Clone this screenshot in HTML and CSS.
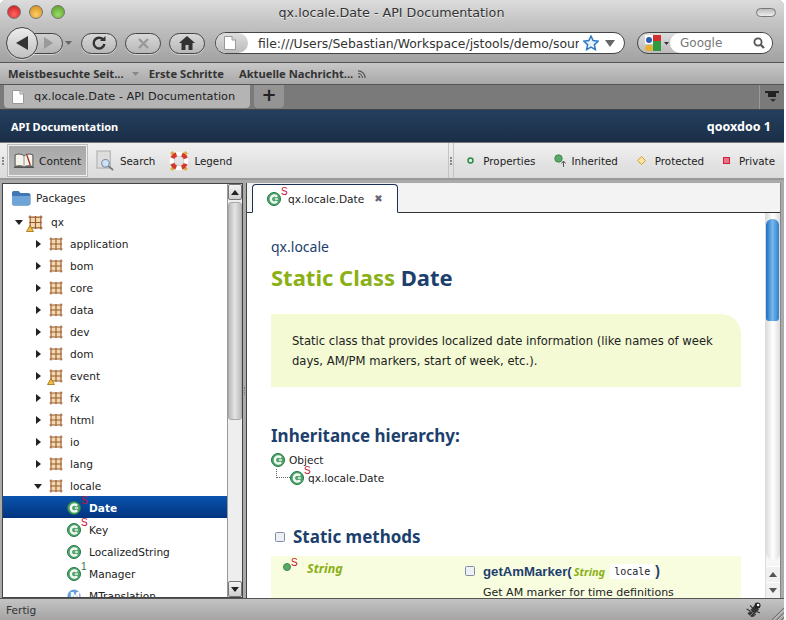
FILE: index.html
```
<!DOCTYPE html>
<html lang="de">
<head>
<meta charset="utf-8">
<title>qx.locale.Date - API Documentation</title>
<link rel="stylesheet" href="styles.css">
</head>
<body>
<svg class="defs" width="0" height="0">
  <defs>
    <symbol id="cls" viewBox="0 0 14 14">
      <circle cx="7" cy="7" r="6.500" fill="#4fa46c" stroke="#1f7a42"/>
      <path d="M10.100 4.800A3.500 3.500 0 1 0 10.100 9.200" fill="none" stroke="#f4f8f4" stroke-width="2.400"/>
      <path d="M7.800 7h3.200" fill="none" stroke="#f4f8f4" stroke-width="1.400"/>
    </symbol>
    <symbol id="pkg" viewBox="0 0 14 14">
      <rect x="2" y="2" width="10" height="10" fill="#f3d9b2"/>
      <path d="M2 2h10v10H2zM7 1v12M1 7h12M2 .5v1.500M12 .5v1.500M2 12v1.500M12 12v1.500M.5 2H2M12 2h1.500M.5 12H2M12 12h1.500" stroke="#9a5a28" stroke-width="1.100" fill="none"/>
    </symbol>
    <symbol id="page" viewBox="0 0 12 14">
      <path d="M.5.5h7.500l3.500 3.500v9.500h-11z" fill="#fff" stroke="#999"/>
      <path d="M8 .5v3.500h3.500" fill="#ddd" stroke="#999"/>
    </symbol>
    <symbol id="box" viewBox="0 0 10 10">
      <rect x=".5" y=".5" width="9" height="9" rx="1" fill="#eef0f4" stroke="#7f8ea6"/>
    </symbol>
    <symbol id="warn" viewBox="0 0 8 7">
      <path d="M4 .5l3.500 6H.5z" fill="#f2c040" stroke="#a06a10" stroke-width=".8"/>
    </symbol>
  </defs>
</svg>
<div class="window">
  <div class="titlebar">
    <div class="lights"><i class="light red"></i><i class="light amber"></i><i class="light green"></i></div>
    <div class="wintitle">qx.locale.Date - API Documentation</div>
    <div class="pill-toggle"></div>
  </div>
  <div class="navbar">
    <div class="backfwd">
      <div class="fwd"><svg width="11" height="12" viewBox="0 0 11 12"><path d="M1 0l9 6-9 6z" fill="#9a9a9a"/></svg></div>
      <div class="back"><svg width="13" height="14" viewBox="0 0 13 14"><path d="M12 0v14L0 7z" fill="#333"/></svg></div>
    </div>
    <svg class="histdrop" width="7" height="4" viewBox="0 0 7 4"><path d="M0 0h7L3.500 4z" fill="#666"/></svg>
    <div class="navbtn"><svg width="16" height="16" viewBox="0 0 16 16"><path d="M12.500 5A5.400 5.400 0 1 0 13.400 9" fill="none" stroke="#333" stroke-width="2.400"/><path d="M9 6h5.500V1z" fill="#333"/></svg></div>
    <div class="navbtn"><svg width="13" height="13" viewBox="0 0 13 13"><path d="M2 2l9 9M11 2l-9 9" stroke="#999" stroke-width="2.400"/></svg></div>
    <div class="navbtn"><svg width="16" height="14" viewBox="0 0 16 14"><path d="M8 0l8 7h-2.500v7H9.500V9h-3v5H2.500V7H0z" fill="#333"/></svg></div>
    <div class="urlbar">
      <div class="identity"><svg width="12" height="14"><use href="#page"/></svg></div>
      <div class="urltext">file:///Users/Sebastian/Workspace/jstools/demo/sourc</div>
      <svg class="star" width="16" height="16" viewBox="0 0 16 16"><path d="M8 1l2.100 4.600 5 .6-3.700 3.400 1 5L8 12.100 3.600 14.600l1-5L.9 6.200l5-.6z" fill="#e8f2fb" stroke="#2f7ac6" stroke-width="1.500"/></svg>
      <svg class="urldrop" width="10" height="7" viewBox="0 0 10 7"><path d="M0 0h10L5 7z" fill="#666"/></svg>
    </div>
    <div class="searchbar">
      <div class="engine">
        <svg width="16" height="16" viewBox="0 0 16 16"><rect x="8" width="8" height="8" fill="#d32f2f"/><rect x="8" y="6" width="8" height="10" fill="#2f9a3f"/><rect y="0" width="8" height="9" fill="#fff"/><circle cx="4" cy="5" r="3" fill="#2a5db0"/><rect y="10" width="8" height="6" rx="3" fill="#e8b030"/></svg>
        <svg width="5" height="3" viewBox="0 0 5 3"><path d="M0 0h5L2.500 3z" fill="#333"/></svg>
      </div>
      <div class="searchfield">
        <span class="searchtext">Google</span>
        <svg width="12" height="12" viewBox="0 0 12 12"><circle cx="5" cy="5" r="3.600" fill="none" stroke="#555" stroke-width="1.800"/><path d="M7.500 7.500L11 11" stroke="#555" stroke-width="2.200"/></svg>
      </div>
    </div>
  </div>
  <div class="bookmarks">
    <span class="bm">Meistbesuchte Seit...</span>
    <svg class="bmdrop" width="7" height="4" viewBox="0 0 7 4"><path d="M0 0h7L3.500 4z" fill="#888"/></svg>
    <span class="bm bm-gap">Erste Schritte</span>
    <span class="bm">Aktuelle Nachricht...</span>
    <svg width="8" height="8" viewBox="0 0 8 8"><circle cx="1.200" cy="6.800" r="1.100" fill="#555"/><path d="M0 3.500A4.500 4.500 0 0 1 4.500 8M0 .8A7.200 7.200 0 0 1 7.200 8" fill="none" stroke="#555" stroke-width="1.200"/></svg>
  </div>
  <div class="tabstrip">
    <div class="btab">
      <svg width="12" height="14"><use href="#page"/></svg>
      <span class="btab-title">qx.locale.Date - API Documentation</span>
    </div>
    <div class="newtab">+</div>
    <div class="tablist">
      <svg width="14" height="12" viewBox="0 0 14 12"><path d="M0 0h14v2h-3v4H3V2H0z" fill="#222"/><path d="M5 8h6L8 11z" fill="#333"/></svg>
    </div>
  </div>
  <div class="appheader">
    <span>API Documentation</span>
    <span class="version">qooxdoo 1</span>
  </div>
  <div class="apptoolbar">
    <div class="grip"></div>
    <div class="tool tool-on">
      <svg width="22" height="16" viewBox="0 0 24 18"><path d="M0 17l2-2h20l2 2z" fill="#555"/><path d="M2 15V2c4-1.500 8-1 10 1.500C14 1 18 .5 22 2v13c-4-1-8-1-10 1-2-2-6-2-10-1z" fill="#f6f3ea" stroke="#444"/><path d="M12 3.500V16" stroke="#888"/><path d="M15 1.500c1 4 3 8 4 12.500" fill="none" stroke="#a33020" stroke-width="1.500"/></svg>
      <span>Content</span>
    </div>
    <div class="tool">
      <svg width="19" height="21" viewBox="0 0 20 22"><rect x="1" y="1" width="14" height="18" fill="#ddd" stroke="#aaa"/><circle cx="10" cy="14" r="4" fill="#cfe2f3" stroke="#7a8ea6" stroke-width="1.200"/><path d="M13 17l5 4" stroke="#777" stroke-width="1.800"/></svg>
      <span>Search</span>
    </div>
    <div class="tool tool-legend">
      <svg width="22" height="22" viewBox="0 0 20 20"><path d="M3 2l3 3M17 2l-3 3M3 18l3-3M17 18l-3-3" stroke="#dcb040" stroke-width="3"/><circle cx="10" cy="10" r="6.500" fill="none" stroke="#fff" stroke-width="4"/><circle cx="10" cy="10" r="6.500" fill="none" stroke="#d43a2a" stroke-width="4" stroke-dasharray="5.100 5.100" stroke-dashoffset="-2.550"/><circle cx="10" cy="10" r="4.300" fill="none" stroke="#bbb" stroke-width=".5"/></svg>
      <span>Legend</span>
    </div>
    <div class="spacer"></div>
    <div class="divider"><div class="grip grip-small"></div></div>
    <div class="legend">
      <div class="leg"><svg width="7" height="7" viewBox="0 0 7 7"><circle cx="3.500" cy="3.500" r="2.500" fill="#dfeee0" stroke="#2f8a4a" stroke-width="1.500"/></svg><span>Properties</span></div>
      <div class="leg leg-tight"><svg width="13" height="14" viewBox="0 0 13 14"><circle cx="4.500" cy="4.500" r="3.700" fill="#58a868" stroke="#3d8a50"/><path d="M9.500 13V7.500M7.500 9.500l2-2.500 2 2.500" fill="none" stroke="#555"/></svg><span>Inherited</span></div>
      <div class="leg"><svg width="9" height="9" viewBox="0 0 9 9"><path d="M4.500.5l4 4-4 4-4-4z" fill="#f9e3a0" stroke="#d0a030"/></svg><span>Protected</span></div>
      <div class="leg"><svg width="7" height="7" viewBox="0 0 7 7"><rect x=".5" y=".5" width="6" height="6" fill="#ee7080" stroke="#d02040"/></svg><span>Private</span></div>
    </div>
  </div>
  <div class="split">
    <div class="treepane">
      <div class="tree">
        <div class="row row-head">
          <svg width="20" height="16" viewBox="0 0 20 16"><path d="M1 3c0-1 .5-2 1.500-2h5l2 2h8c1 0 2 1 2 2v8c0 1.500-1 2.500-2.500 2.500h-14C1.500 15.500 1 14.500 1 13z" fill="#3f78b4"/><path d="M1 6h18v7c0 1.500-1 2.500-2.500 2.500h-14C2 15.500 1 14.500 1 13z" fill="#6fa4d8"/></svg>
          <span>Packages</span>
        </div>
        <div class="row row-root"><i class="arrow down"></i><span class="warned"><svg width="15" height="15"><use href="#pkg"/></svg><svg class="warn" width="8" height="7"><use href="#warn"/></svg></span><span>qx</span></div>
        <div class="row row-pkg"><i class="arrow right"></i><svg width="14" height="14"><use href="#pkg"/></svg><span>application</span></div>
        <div class="row row-pkg"><i class="arrow right"></i><svg width="14" height="14"><use href="#pkg"/></svg><span>bom</span></div>
        <div class="row row-pkg"><i class="arrow right"></i><svg width="14" height="14"><use href="#pkg"/></svg><span>core</span></div>
        <div class="row row-pkg"><i class="arrow right"></i><svg width="14" height="14"><use href="#pkg"/></svg><span>data</span></div>
        <div class="row row-pkg"><i class="arrow right"></i><svg width="14" height="14"><use href="#pkg"/></svg><span>dev</span></div>
        <div class="row row-pkg"><i class="arrow right"></i><svg width="14" height="14"><use href="#pkg"/></svg><span>dom</span></div>
        <div class="row row-pkg"><i class="arrow right"></i><span class="warned"><svg width="14" height="14"><use href="#pkg"/></svg><svg class="warn" width="8" height="7"><use href="#warn"/></svg></span><span>event</span></div>
        <div class="row row-pkg"><i class="arrow right"></i><svg width="14" height="14"><use href="#pkg"/></svg><span>fx</span></div>
        <div class="row row-pkg"><i class="arrow right"></i><svg width="14" height="14"><use href="#pkg"/></svg><span>html</span></div>
        <div class="row row-pkg"><i class="arrow right"></i><svg width="14" height="14"><use href="#pkg"/></svg><span>io</span></div>
        <div class="row row-pkg"><i class="arrow right"></i><svg width="14" height="14"><use href="#pkg"/></svg><span>lang</span></div>
        <div class="row row-pkg"><i class="arrow down"></i><svg width="14" height="14"><use href="#pkg"/></svg><span>locale</span></div>
        <div class="row row-cls row-sel"><span class="marked"><svg width="14" height="14"><use href="#cls"/></svg><sup class="mark">S</sup></span><span>Date</span></div>
        <div class="row row-cls"><span class="marked"><svg width="14" height="14"><use href="#cls"/></svg><sup class="mark">S</sup></span><span>Key</span></div>
        <div class="row row-cls"><span class="marked"><svg width="14" height="14"><use href="#cls"/></svg></span><span>LocalizedString</span></div>
        <div class="row row-cls"><span class="marked"><svg width="14" height="14"><use href="#cls"/></svg><sup class="mark mark-g">1</sup></span><span>Manager</span></div>
        <div class="row row-cls"><span class="marked"><svg width="14" height="14" viewBox="0 0 14 14"><circle cx="7" cy="7" r="6.500" fill="#6a9fd8"/><text x="3" y="11" font-size="10" font-weight="bold" fill="#fff">M</text></svg></span><span>MTranslation</span></div>
      </div>
      <div class="vscroll">
        <div class="sbtn"><i class="up"></i></div>
        <div class="vtrack"><div class="vthumb"></div></div>
        <div class="sbtn"><i class="dn"></i></div>
      </div>
    </div>
    <div class="sash"><i class="sash-dots"></i></div>
    <div class="docpane">
      <div class="doctabs">
        <div class="doctab">
          <span class="marked"><svg width="14" height="14"><use href="#cls"/></svg><sup class="mark">S</sup></span>
          <span class="doctab-title">qx.locale.Date</span>
          <span class="doctab-x">✖</span>
        </div>
      </div>
      <div class="docbody">
        <div class="doc">
          <div class="pkgname">qx.locale</div>
          <h1 class="h1"><span class="h1-g">Static Class</span> Date</h1>
          <div class="desc">Static class that provides localized date information (like names of week days, AM/PM markers, start of week, etc.).</div>
          <h2 class="h2">Inheritance hierarchy:</h2>
          <div class="hier"><span class="marked"><svg width="14" height="14"><use href="#cls"/></svg></span><span>Object</span></div>
          <div class="hier hier-child"><i class="elbow"></i><span class="marked"><svg width="14" height="14"><use href="#cls"/></svg><sup class="mark">S</sup></span><span>qx.locale.Date</span></div>
          <h2 class="h2 h2-box"><svg width="10" height="10"><use href="#box"/></svg>Static methods</h2>
          <div class="method">
            <div class="m-type">
              <span class="marked m-dot"><svg width="8" height="8" viewBox="0 0 8 8"><circle cx="4" cy="4" r="3.500" fill="#58a868" stroke="#3d8a50"/></svg><sup class="mark">S</sup></span>
              <em>String</em>
            </div>
            <div class="m-body">
              <div class="m-sig"><svg width="10" height="10"><use href="#box"/></svg><b>getAmMarker(</b><em>String</em><code>locale</code><b>)</b></div>
              <div class="m-desc">Get AM marker for time definitions</div>
            </div>
          </div>
        </div>
        <div class="vscroll doc-scroll">
          <div class="vtrack"><div class="bluethumb"></div></div>
          <div class="sbtn"><i class="up"></i></div>
          <div class="sbtn"><i class="dn"></i></div>
        </div>
      </div>
    </div>
  </div>
  <div class="statusbar">
    <span>Fertig</span>
    <svg width="17" height="15" viewBox="0 0 14 13"><path d="M3.500 11.500L10 4.500" stroke="#333" stroke-width="5"/><path d="M2 10l3-3M4 12l3-3M6 9l-2-2" stroke="#aaa" stroke-width=".6"/><circle cx="10.500" cy="3" r="2.600" fill="#222"/><circle cx="11" cy="2.600" r="1.100" fill="#fff"/><path d="M1 6l3 1.500M4 3l2.500 2.500M6 13l3-2.500M9.500 8l3 1.500" stroke="#333"/></svg>
    <svg class="resize" width="13" height="13" viewBox="0 0 11 11"><path d="M1 11L11 1M5 11l6-6M9 11l2-2" stroke="#6f6f6f"/><path d="M2 11L11 2M6 11l5-5M10 11l1-1" stroke="#d8d8d8" stroke-width=".7"/></svg>
  </div>
</div>
</body>
</html>
```
FILE: styles.css
```
* { box-sizing: border-box; }
html, body { margin: 0; height: 620px; overflow: hidden; background: #fff; }
.defs { position: absolute; }
.window { width: 784px; height: 620px; display: flex; flex-direction: column; border-radius: 6px 6px 0 0; overflow: hidden; font: 10.600px "DejaVu Sans", sans-serif; color: #222; background: #aaa; }
.titlebar { height: 24px; flex: none; display: grid; grid-template-columns: 1fr auto 1fr; align-items: center; padding: 0 8px 0 7px; background: linear-gradient(#dcdcdc, #c2c2c2); }
.lights { display: flex; gap: 8px; }
.light { width: 14px; height: 14px; border-radius: 50%; border: 1px solid #777; display: block; }
.red { background: radial-gradient(circle at 50% 70%, #f66, #c11); }
.amber { background: radial-gradient(circle at 50% 70%, #fc6, #c81); }
.green { background: radial-gradient(circle at 50% 70%, #9d6, #592); }
.wintitle { font-size: 12.700px; color: #333; text-shadow: 0 1px 0 #eee; white-space: nowrap; }
.pill-toggle { width: 20px; height: 9px; justify-self: end; border: 1px solid #777; border-radius: 5px; background: linear-gradient(#bbb, #eee); }
.navbar { height: 39px; flex: none; display: flex; align-items: center; padding: 0 10px 0 6px; background: linear-gradient(#c2c2c2, #a2a2a2); border-bottom: 1px solid #555; }
.backfwd { width: 57px; height: 33px; position: relative; display: flex; align-items: center; }
.back { width: 32px; height: 32px; border-radius: 50%; border: 1px solid #444; background: linear-gradient(#ececec, #c0c0c0); box-shadow: 0 1px 0 rgba(255, 255, 255, .5); display: flex; align-items: center; justify-content: center; position: absolute; left: 0; top: 0; }
.fwd { position: absolute; left: 24px; top: 6px; width: 33px; height: 21px; border: 1px solid #444; border-radius: 0 11px 11px 0; background: linear-gradient(#cfcfcf, #b4b4b4); box-shadow: 0 1px 0 rgba(255, 255, 255, .5); display: flex; align-items: center; justify-content: center; padding-left: 3px; }
.histdrop { margin: 0 9px 0 2px; }
.navbtn { width: 36px; height: 21px; margin-right: 8px; border: 1px solid #444; border-radius: 11px; background: linear-gradient(#d8d8d8, #b8b8b8); box-shadow: 0 1px 0 rgba(255, 255, 255, .5); display: flex; align-items: center; justify-content: center; }
.urlbar { width: 410px; height: 22px; margin-left: 2px; border: 1px solid #444; border-radius: 11px; background: #fff; display: flex; align-items: center; overflow: hidden; }
.identity { width: 32px; height: 100%; background: linear-gradient(#ddd, #bbb); border-radius: 0 11px 11px 0; display: flex; align-items: center; justify-content: center; padding-right: 4px; }
.urltext { flex: 1; padding-left: 10px; font-size: 12.400px; white-space: nowrap; overflow: hidden; color: #333; }
.star { margin-left: 4px; }
.urldrop { margin: 0 9px 0 6px; }
.searchbar { width: 136px; height: 22px; margin-left: 12px; border: 1px solid #444; border-radius: 11px; background: linear-gradient(#ddd, #bbb); display: flex; align-items: center; overflow: hidden; }
.engine { width: 32px; display: flex; align-items: center; gap: 3px; padding-left: 7px; flex: none; }
.searchfield { flex: 1; height: 100%; background: #fff; border-radius: 11px 0 0 11px; display: flex; align-items: center; justify-content: space-between; padding: 0 7px 0 10px; }
.searchtext { font-size: 12px; color: #777; }
.bookmarks { height: 22px; flex: none; display: flex; align-items: center; padding: 0 0 0 8px; background: linear-gradient(#c8c8c8, #a8a8a8); border-bottom: 1px solid #555; }
.bm { font: bold 11.200px "Noto Sans", sans-serif; color: #333; white-space: nowrap; margin-right: 5px; }
.bmdrop { margin: 0 10px 0 3px; }
.bm-gap { margin-right: 15px; }
.tabstrip { height: 25px; flex: none; display: flex; align-items: stretch; background: #7a7a7a; padding-left: 4px; border-bottom: 1px solid #444; }
.btab { width: 246px; display: flex; align-items: center; gap: 10px; padding-left: 8px; background: #b4b4b4; border-radius: 0 0 4px 4px; margin-bottom: 1px; }
.btab-title { font-size: 11.300px; color: #222; white-space: nowrap; }
.newtab { width: 30px; margin: 0 0 1px 4px; background: #949494; border-radius: 0 0 4px 4px; text-align: center; font-size: 18px; line-height: 20px; font-weight: bold; color: #222; }
.tablist { margin-left: auto; width: 25px; border-left: 1px solid #999; display: flex; align-items: center; justify-content: center; }
.appheader { height: 33px; flex: none; display: flex; align-items: center; justify-content: space-between; padding: 0 13px 0 11px; background: linear-gradient(#243f5e, #1b2e47); color: #fff; font: bold 11px "Noto Sans", sans-serif; border-bottom: 1px solid #777; }
.version { font-size: 12.500px; }
.apptoolbar { height: 37px; flex: none; display: flex; align-items: center; background: linear-gradient(#efefef 0, #eaeaea 30%, #e2e2e2 60%, #dcdcdc 100%); border-bottom: 2px solid #999; padding: 0 9px 0 2px; }
.grip { width: 2px; height: 8px; margin-right: 4px; border-left: 2px dotted #888; }
.grip-small { margin: 0; }
.tool { display: flex; align-items: center; gap: 5px; height: 31px; margin-right: 13px; color: #222; font-size: 10.300px; }
.tool-legend { gap: 4px; }
.tool-on { background: linear-gradient(#a8a8a8, #b8b8b8); border: 1px solid #eee; box-shadow: 0 0 0 1px #bbb; width: 79px; padding-left: 4px; gap: 4px; margin-right: 9px; font-size: 10.600px; }
.spacer { flex: 1; }
.divider { width: 6px; height: 100%; border-left: 1px solid #c4c4c4; border-right: 1px solid #c4c4c4; display: flex; align-items: center; justify-content: center; }
.legend { display: flex; align-items: center; padding-left: 13px; font-size: 10.300px; }
.leg { display: flex; align-items: center; gap: 9px; margin-right: 19px; white-space: nowrap; }
.leg-tight { gap: 4px; }
.leg:last-child { margin-right: 0; }
.split { flex: 1; min-height: 0; display: flex; padding: 3px 3px 0 2px; background: #aaa; }
.treepane { width: 241px; flex: none; display: flex; background: #fff; border: 1px solid #444; overflow: hidden; }
.sash { width: 3px; flex: none; display: flex; align-items: center; justify-content: center; }
.sash-dots { display: block; width: 1px; height: 8px; border-left: 1px dotted #777; }
.tree { flex: 1; min-width: 0; overflow: hidden; padding-top: 1px; }
.row { height: 22px; padding-top: 2px; display: flex; align-items: center; white-space: nowrap; color: #222; }
.row-head { padding-left: 8px; gap: 5px; height: 24px; margin-bottom: 1px; }
.row-root { padding-left: 12px; gap: 5px; }
.row-root .warned { margin-right: 3px; }
.row-pkg { padding-left: 33px; gap: 7px; }
.row-cls { padding-left: 64px; gap: 8px; }
.row-sel { background: linear-gradient(#0a53ae, #02347f); color: #fff; font-weight: bold; }
.arrow { display: block; flex: none; width: 0; height: 0; }
.arrow.right { border-left: 5px solid #222; border-top: 4px solid transparent; border-bottom: 4px solid transparent; margin-right: 1px; }
.arrow.down { border-top: 5px solid #222; border-left: 4px solid transparent; border-right: 4px solid transparent; }
.row-pkg .arrow.down { margin-left: -2px; }
.warned, .marked { position: relative; display: inline-flex; align-items: center; flex: none; }
.warn { position: absolute; left: -2px; bottom: -2px; }
.mark { position: absolute; left: 100%; top: -5px; font: 10px/9px "Liberation Sans Narrow", "Liberation Sans", sans-serif; color: #c8102e; }
.mark-g { color: #2a7a46; }
.vscroll { width: 15px; flex: none; display: flex; flex-direction: column; background: #e8e8e8; border-left: 1px solid #999; }
.sbtn { height: 16px; flex: none; display: flex; align-items: center; justify-content: center; border: 1px solid #777; border-radius: 2px; background: linear-gradient(#f4f4f4, #cfcfcf); }
.up { border-bottom: 5px solid #222; border-left: 4px solid transparent; border-right: 4px solid transparent; }
.dn { border-top: 5px solid #222; border-left: 4px solid transparent; border-right: 4px solid transparent; }
.vtrack { flex: 1; min-height: 0; padding: 2px 0; background: #eee; }
.vthumb { height: 218px; border-radius: 3px; background: linear-gradient(90deg, #bbb, #e4e4e4, #bbb); border: 1px solid #aaa; }
.docpane { flex: 1; min-width: 0; display: flex; flex-direction: column; border-left: 1px solid #444; border-right: 1px solid #888; background: #fff; }
.doctabs { height: 30px; flex: none; background: #f3f3f3; border-bottom: 1px solid #333; padding-left: 5px; padding-top: 1px; }
.doctab { width: 146px; height: 29px; display: flex; align-items: center; background: #fff; border: 1px solid #1a2f55; border-bottom: 1px solid #fff; border-radius: 4px 4px 0 0; padding-left: 14px; }
.doctab-title { margin-left: 7px; color: #222; }
.doctab-x { margin-left: 10px; font-size: 10px; color: #667; }
.docbody { flex: 1; min-height: 0; display: flex; }
.doc { flex: 1; min-width: 0; overflow: hidden; padding: 26px 24px 0 24px; }
.pkgname { font: 14px "Noto Sans", sans-serif; color: #1d3f6e; line-height: 16px; }
.h1 { margin: 7px 0 0; font: bold 22px/30px "Noto Sans", sans-serif; color: #1d3f6e; }
.h1-g { color: #8ab014; }
.desc { margin-top: 22px; height: 73px; padding: 17px 20px 0 21px; background: #f3fad4; border-radius: 0 20px 0 0; font-size: 11.600px; line-height: 20px; color: #222; }
.h2 { margin: 37px 0 0; font: bold 17px/24px "Noto Sans", sans-serif; color: #1d3f6e; }
.hier { height: 18px; display: flex; align-items: center; gap: 4px; color: #222; margin-top: 3px; }
.hier + .hier { margin-top: 0; }
.hier-child { gap: 0; }
.hier-child .marked { margin-right: 4px; }
.elbow { width: 14px; height: 9px; margin: -9px 0 0 5px; border-left: 1px dotted #666; border-bottom: 1px dotted #666; display: block; }
.h2-box { display: flex; align-items: center; gap: 8px; margin-top: 38px; padding-left: 4px; }
.method { margin-top: 7px; background: #f8fde0; display: flex; height: 60px; padding-top: 4px; }
.m-type { width: 194px; display: flex; align-items: flex-start; padding: 0 0 0 12px; gap: 16px; flex: none; }
.m-dot { margin-top: 3px; }
.m-type em { font: italic bold 12.500px "Noto Sans", sans-serif; color: #8ab014; }
.m-body { flex: 1; }
.m-sig { display: flex; align-items: center; gap: 8px; height: 22px; }
.m-sig b { font: bold 13.200px "Liberation Sans", sans-serif; color: #1d3f6e; margin-right: -8px; }
.m-sig b:last-child { margin-left: -7px; font-size: 14px; }
.m-sig em { font: italic bold 11px "Noto Sans", sans-serif; color: #8ab014; margin-left: 2px; }
.m-sig code { font: 10px "DejaVu Sans Mono", monospace; background: #fff; padding: 2px 4px; color: #222; margin-left: -3px; }
.m-desc { margin-left: 18px; margin-top: 4px; font-size: 11px; color: #222; }
.doc-scroll { border-left: 1px solid #ddd; background: #f6f6f6; }
.doc-scroll .vtrack { background: linear-gradient(90deg, #ddd, #fff, #ddd); border-radius: 0 0 7px 7px; margin-bottom: 6px; }
.doc-scroll .sbtn { border: 0; border-top: 1px solid #fff; background: #f0f0f0; }
.doc-scroll .up { border-bottom-color: #555; }
.doc-scroll .dn { border-top-color: #555; }
.bluethumb { height: 102px; margin: 4px 1px 0 0; border-radius: 6px 6px 3px 3px; background: linear-gradient(90deg, #1a6fc0, #7ab8ea, #2a80d0); }
.statusbar { height: 22px; flex: none; display: flex; align-items: center; padding-left: 6px; background: linear-gradient(#c4c4c4, #a4a4a4); border-top: 1px solid #555; color: #333; }
.statusbar span { flex: 1; }
.resize { margin: 4px 0 0 9px; align-self: flex-end; }
```
